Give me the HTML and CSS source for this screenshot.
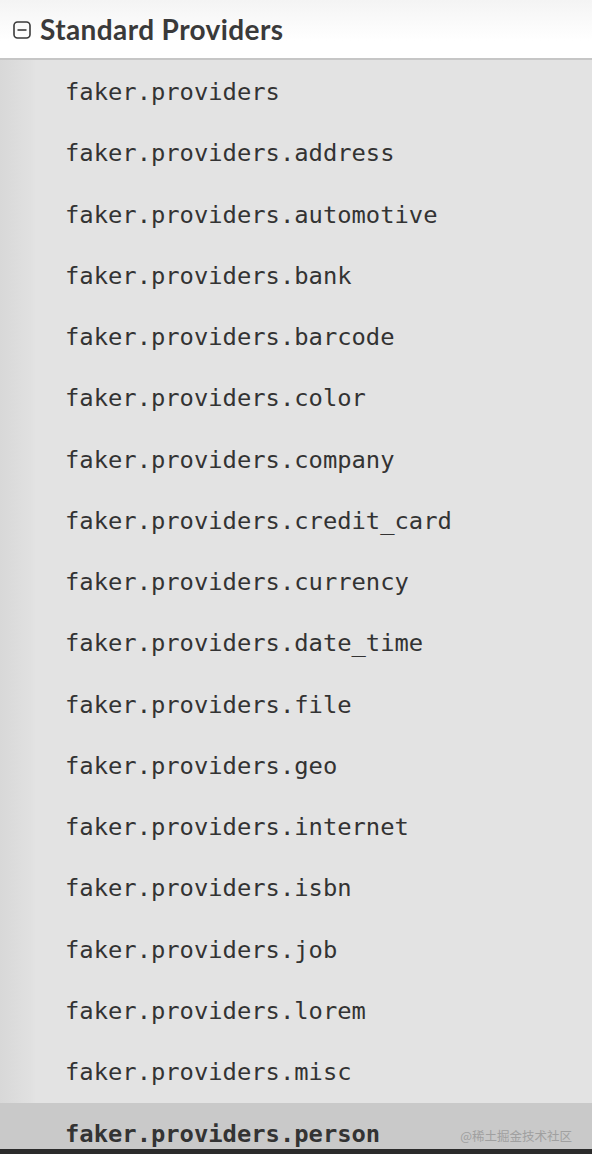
FILE: index.html
```html
<!DOCTYPE html>
<html lang="en">
<head>
    <meta charset="UTF-8">
    <meta name="viewport" content="width=device-width, initial-scale=1.0">
    <title>Standard Providers</title>
    <link rel="stylesheet" href="styles.css">
</head>
<body>
    <div id="heading">
        <svg class="toggle" width="18" height="18" viewBox="0 0 18 18">
            <rect x="1" y="1" width="16" height="16" rx="3.5" fill="none" stroke="#3a3a3a" stroke-width="1.6"/>
            <line x1="4.5" y1="9" x2="13.5" y2="9" stroke="#3a3a3a" stroke-width="1.6"/>
        </svg>
        <h3>Standard Providers</h3>
    </div>
    <main>
        <ul class="providers">
            <li>faker.providers</li>
            <li>faker.providers.address</li>
            <li>faker.providers.automotive</li>
            <li>faker.providers.bank</li>
            <li>faker.providers.barcode</li>
            <li>faker.providers.color</li>
            <li>faker.providers.company</li>
            <li>faker.providers.credit_card</li>
            <li>faker.providers.currency</li>
            <li>faker.providers.date_time</li>
            <li>faker.providers.file</li>
            <li>faker.providers.geo</li>
            <li>faker.providers.internet</li>
            <li>faker.providers.isbn</li>
            <li>faker.providers.job</li>
            <li>faker.providers.lorem</li>
            <li>faker.providers.misc</li>
            <li class="current">faker.providers.person<span class="mark">@稀土掘金技术社区</span></li>
        </ul>
    </main>
    <div id="bottom"></div>
</body>
</html>
```

FILE: styles.css
```css
html, body {
    margin: 0;
    height: 100%;
    overflow: hidden;
}
body {
    background: #e2e2e2;
    display: flex;
    flex-direction: column;
}
#heading {
    display: flex;
    align-items: center;
    gap: 9px;
    padding-left: 13px;
    background: linear-gradient(#f4f4f4, #ffffff 70%);
    border-bottom: 2px solid #c6c6c6;
    box-sizing: border-box;
    flex: none;
    height: 60px;
}
#heading h3 {
    margin: 0;
    font-family: 'Lato', sans-serif;
    font-weight: 700;
    font-size: 28px;
    letter-spacing: 0.4px;
    color: #3a3a3a;
}
.toggle {
    flex: none;
    margin-top: 1px;
}
main {
    flex: 1;
    background: linear-gradient(to right, #d8d8d8, #e0e0e0 30px, #e3e3e3 36px);
    overflow: hidden;
}
.providers {
    list-style: none;
    margin: 0;
    padding: 2px 0 0 0;
}
.providers li {
    height: 61.25px;
    line-height: 61.25px;
    padding-left: 65px;
    font-family: 'DejaVu Sans Mono', monospace;
    font-size: 23.8px;
    color: #333333;
    position: relative;
}
.providers li.current {
    background: #c9c9c9;
    font-weight: 700;
    line-height: 62px;
}
.mark {
    position: absolute;
    right: 20px;
    top: 2px;
    font-family: 'Noto Sans CJK SC', sans-serif;
    font-weight: 400;
    font-size: 12.5px;
    color: #a0a0a0;
}
#bottom {
    height: 5px;
    background: #2b2b2b;
    flex: none;
}
```
